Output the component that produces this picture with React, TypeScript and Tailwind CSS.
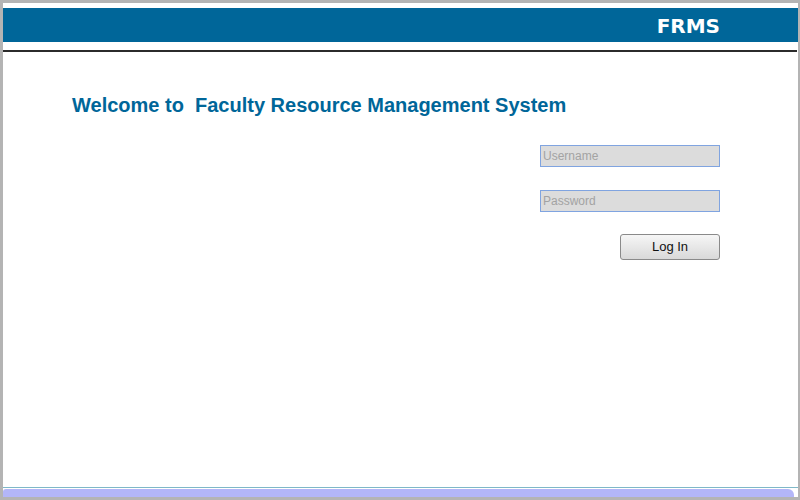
export default function App() {
  return (
    <div className="w-[800px] h-[500px] bg-white border-[3px] border-[#b4b4b4] border-r-[2px] flex flex-col" style={{ fontFamily: "Arial" }}>
      <div className="pt-[5px]">
        <div className="h-[34px] bg-[#006699] flex items-center justify-end pr-[78px] pt-[2px]">
          <span className="text-white font-bold text-[20px]" style={{ fontFamily: '"DejaVu Sans", Verdana, sans-serif' }}>
            FRMS
          </span>
        </div>
      </div>
      <div className="mt-[8px] h-[2px] bg-[#2b2b2b] mr-[1px]" />
      <div className="flex-1 flex flex-col" style={{ fontFamily: '"Liberation Sans", Arial, sans-serif' }}>
        <h1 className="ml-[69px] mt-[41px] text-[20px] leading-[24px] font-bold text-[#006699] whitespace-pre">
          {"Welcome to  Faculty Resource Management System"}
        </h1>
        <div className="flex flex-col items-end mr-[78px] mt-[28px]">
          <input
            placeholder="Username"
            className="w-[180px] h-[22px] bg-[#dcdcdc] border border-[#80a4e0] px-[2px] text-[12px] text-[#555] placeholder:text-[#a3a3a3] outline-none"
          />
          <input
            type="password"
            placeholder="Password"
            className="mt-[23px] w-[180px] h-[22px] bg-[#dcdcdc] border border-[#80a4e0] px-[2px] text-[12px] text-[#555] placeholder:text-[#a3a3a3] outline-none"
          />
          <button className="mt-[22px] w-[100px] h-[26px] rounded-[3px] border border-[#8a8a8a] bg-gradient-to-b from-[#f6f6f6] to-[#d9d9d9] text-[13px] text-[#111]">
            Log In
          </button>
        </div>
      </div>
      <div className="h-[1px] bg-[#7fb8c8]" />
      <div className="h-[1px]" />
      <div className="h-[8px] bg-[#b3b6f8] rounded-tr-[6px] rounded-tl-[3px] mr-[4px]" />
    </div>
  );
}
